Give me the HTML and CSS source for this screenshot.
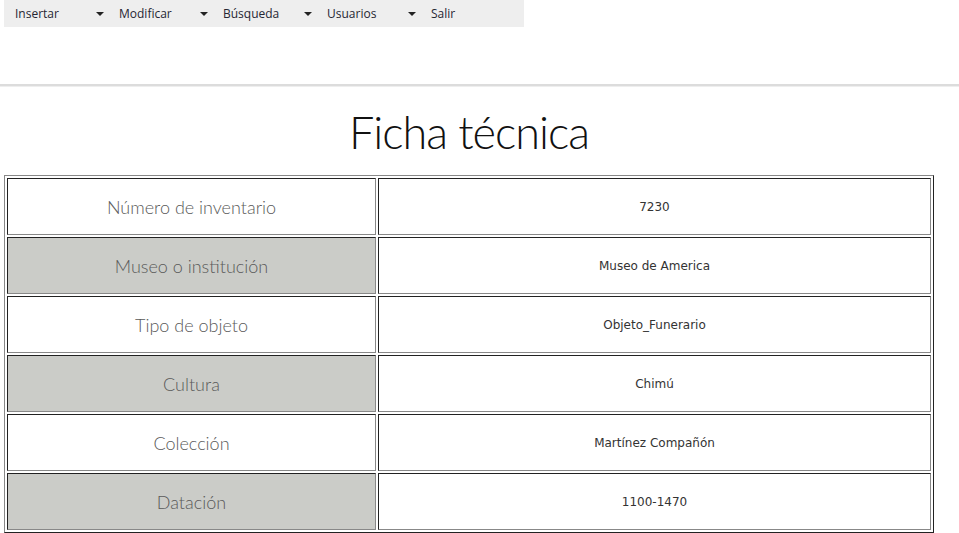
FILE: index.html
```html
<!DOCTYPE html>
<html lang="es">
<head>
<meta charset="utf-8">
<title>Ficha técnica</title>
<link rel="stylesheet" href="styles.css">
</head>
<body>
<header class="header">
  <nav class="menu">
    <div class="menu-item"><span>Insertar</span><i class="caret"></i></div>
    <div class="menu-item"><span>Modificar</span><i class="caret"></i></div>
    <div class="menu-item"><span>Búsqueda</span><i class="caret"></i></div>
    <div class="menu-item"><span>Usuarios</span><i class="caret"></i></div>
    <div class="menu-item"><span>Salir</span></div>
  </nav>
</header>
<main class="content">
  <h1 class="title">Ficha técnica</h1>
  <table class="ficha">
    <tr><td class="label">Número de inventario</td><td class="value">7230</td></tr>
    <tr class="alt"><td class="label">Museo o institución</td><td class="value">Museo de America</td></tr>
    <tr><td class="label">Tipo de objeto</td><td class="value">Objeto_Funerario</td></tr>
    <tr class="alt"><td class="label">Cultura</td><td class="value">Chimú</td></tr>
    <tr><td class="label">Colección</td><td class="value">Martínez Compañón</td></tr>
    <tr class="alt"><td class="label">Datación</td><td class="value">1100-1470</td></tr>
  </table>
</main>
</body>
</html>
```
FILE: styles.css
```css
html, body {
  margin: 0;
  padding: 0;
  background: #fff;
}
body {
  font-family: "Open Sans", sans-serif;
  overflow: hidden;
}
.header {
  height: 84px;
  border-bottom: 2px solid #dcdcdc;
  box-shadow: 0 1px 0 #eeeeee;
}
.menu {
  display: flex;
  width: 520px;
  height: 27px;
  margin-left: 4px;
  background: #eeeeee;
}
.menu-item {
  width: 104px;
  display: flex;
  align-items: center;
  padding-left: 11px;
  box-sizing: border-box;
  font-size: 12px;
  color: #262633;
}
.menu-item span {
  width: 81px;
}
.caret {
  width: 0;
  height: 0;
  border-left: 4px solid transparent;
  border-right: 4px solid transparent;
  border-top: 4px solid #222;
}
.content {
  width: 930px;
  margin-left: 4px;
}
.title {
  margin: 18px 0 0;
  height: 71px;
  text-align: center;
  font-family: "Lato", sans-serif;
  font-weight: 300;
  font-size: 45px;
  line-height: 56px;
  color: #111;
  letter-spacing: -1px;
}
.ficha {
  width: 930px;
  border-collapse: separate;
  border-spacing: 2px;
  border: 1px solid;
  border-color: #888 #222 #222 #888;
}
.ficha td {
  height: 55px;
  padding: 0;
  border: 1px solid;
  border-color: #222 #888 #888 #222;
  text-align: center;
  vertical-align: middle;
}
.label {
  width: 367px;
  font-family: "Lato", sans-serif;
  font-weight: 300;
  font-size: 18px;
  color: #5a5a5a;
}
.value {
  font-family: "DejaVu Sans", sans-serif;
  font-size: 12px;
  color: #333;
}
.alt .label {
  background: #cbccc8;
}
```
